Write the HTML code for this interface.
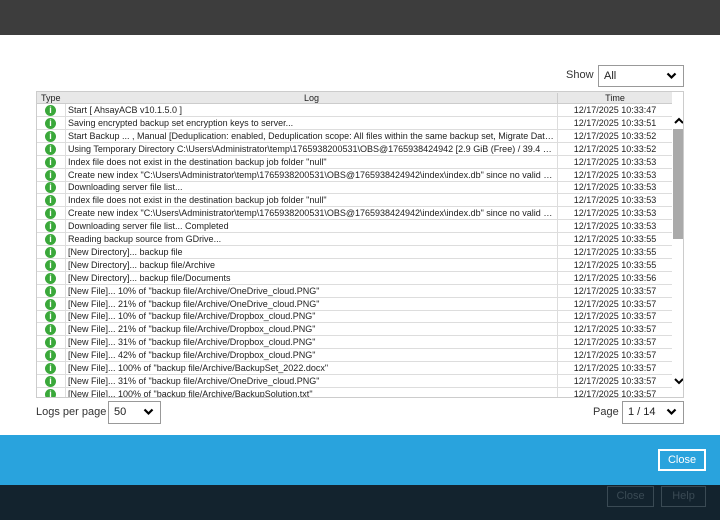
<!DOCTYPE html>
<html><head><style>
*{margin:0;padding:0;box-sizing:border-box}
body{width:720px;height:520px;position:relative;overflow:hidden;background:#fff;font-family:"Liberation Sans",sans-serif;font-size:9px;color:#222}
.top{position:absolute;left:0;top:0;width:720px;height:35px;background:#3d3d3d}
.blue{position:absolute;left:0;top:435px;width:720px;height:50px;background:#29a3dd}
.dark{position:absolute;left:0;top:485px;width:720px;height:35px;background:#13232e}
.sel{position:absolute;border:1px solid #999;background:#fff;font-size:11px;padding:4px 0 0 5px}
.chev{position:absolute;right:6px;top:5px}
.lbl{position:absolute;font-size:11px;color:#333}
.tbl{position:absolute;left:36px;top:91px;width:648px;height:307px;border:1px solid #ccc;overflow:hidden}
.hdr{position:absolute;left:0;top:0;height:12px;width:635px;background:#e8e8e8;border-bottom:1px solid #ccc;font-size:9px}
.row{position:absolute;left:0;width:635px;height:13px;border-bottom:1px solid #ddd;white-space:nowrap}
.c1{position:absolute;left:0;width:29px;height:100%;border-right:1px solid #ddd}
.c2{position:absolute;left:29px;width:492px;height:100%;border-right:1px solid #ddd;padding-left:2px;padding-right:3px;overflow:hidden;text-overflow:ellipsis;line-height:12px}
.c3{position:absolute;left:521px;width:114px;text-align:center;line-height:12px}
.ic{position:absolute;left:8px;top:1px;width:11px;height:11px;border-radius:50%;background:#3aa83a;color:#fff;font-weight:bold;font-size:9px;line-height:11px;text-align:center}
.sb{position:absolute;left:635px;top:0;width:13px;height:307px;background:#fff}
.thumb{position:absolute;left:1px;top:37px;width:11px;height:110px;background:#aaa}
.btn{position:absolute;font-size:11px;text-align:center}
</style></head><body>
<div class="top"></div>
<div class="lbl" style="left:566px;top:69px">Show</div>
<div class="sel" style="left:598px;top:65px;width:86px;height:22px">All<svg class="chev" width="11" height="9" viewBox="0 0 11 9"><path d="M1.5 2.5 L5.5 6.5 L9.5 2.5" stroke="#000" stroke-width="2.2" fill="none"/></svg></div>
<div class="tbl">
<div class="hdr"><span style="position:absolute;left:4px;top:1px">Type</span><span style="position:absolute;left:29px;width:492px;text-align:center;top:1px;border-right:1px solid #ccc;height:12px">Log</span><span style="position:absolute;left:521px;width:114px;text-align:center;top:1px">Time</span></div>
<div id="rows"></div>
<div class="sb"><svg style="position:absolute;left:2px;top:25px" width="10" height="8"><path d="M1 6 L5 2 L9 6" stroke="#000" stroke-width="2" fill="none"/></svg><div class="thumb"></div><svg style="position:absolute;left:2px;top:285px" width="10" height="8"><path d="M1 2 L5 6 L9 2" stroke="#000" stroke-width="2" fill="none"/></svg></div>
</div>
<div class="lbl" style="left:36px;top:406px">Logs per page</div>
<div class="sel" style="left:108px;top:401px;width:53px;height:23px">50<svg class="chev" width="11" height="9" viewBox="0 0 11 9"><path d="M1.5 2.5 L5.5 6.5 L9.5 2.5" stroke="#000" stroke-width="2.2" fill="none"/></svg></div>
<div class="lbl" style="left:593px;top:406px">Page</div>
<div class="sel" style="left:622px;top:401px;width:62px;height:23px">1 / 14<svg class="chev" width="11" height="9" viewBox="0 0 11 9"><path d="M1.5 2.5 L5.5 6.5 L9.5 2.5" stroke="#000" stroke-width="2.2" fill="none"/></svg></div>
<div class="blue"></div>
<div class="btn" style="left:658px;top:449px;width:48px;height:22px;border:2px solid #fff;color:#fff;line-height:18px;background:#29a3dd">Close</div>
<div class="dark"></div>
<div class="btn" style="left:607px;top:486px;width:47px;height:21px;border:1px solid #3a4a54;color:#3a4a54;line-height:19px">Close</div>
<div class="btn" style="left:661px;top:486px;width:45px;height:21px;border:1px solid #3a4a54;color:#3a4a54;line-height:19px">Help</div>
<script>
var d=[
["Start [ AhsayACB v10.1.5.0 ]","47"],
["Saving encrypted backup set encryption keys to server...","51"],
["Start Backup ... , Manual [Deduplication: enabled, Deduplication scope: All files within the same backup set, Migrate Data: ...","52"],
["Using Temporary Directory C:\\Users\\Administrator\\temp\\1765938200531\\OBS@1765938424942 [2.9 GiB (Free) / 39.4 Gi...","52"],
["Index file does not exist in the destination backup job folder \"null\"","53"],
["Create new index \"C:\\Users\\Administrator\\temp\\1765938200531\\OBS@1765938424942\\index\\index.db\" since no valid in...","53"],
["Downloading server file list...","53"],
["Index file does not exist in the destination backup job folder \"null\"","53"],
["Create new index \"C:\\Users\\Administrator\\temp\\1765938200531\\OBS@1765938424942\\index\\index.db\" since no valid in...","53"],
["Downloading server file list... Completed","53"],
["Reading backup source from GDrive...","55"],
["[New Directory]... backup file","55"],
["[New Directory]... backup file/Archive","55"],
["[New Directory]... backup file/Documents","56"],
["[New File]... 10% of \"backup file/Archive/OneDrive_cloud.PNG\"","57"],
["[New File]... 21% of \"backup file/Archive/OneDrive_cloud.PNG\"","57"],
["[New File]... 10% of \"backup file/Archive/Dropbox_cloud.PNG\"","57"],
["[New File]... 21% of \"backup file/Archive/Dropbox_cloud.PNG\"","57"],
["[New File]... 31% of \"backup file/Archive/Dropbox_cloud.PNG\"","57"],
["[New File]... 42% of \"backup file/Archive/Dropbox_cloud.PNG\"","57"],
["[New File]... 100% of \"backup file/Archive/BackupSet_2022.docx\"","57"],
["[New File]... 31% of \"backup file/Archive/OneDrive_cloud.PNG\"","57"],
["[New File]... 100% of \"backup file/Archive/BackupSolution.txt\"","57"]];
var h="";
d.forEach(function(r,i){var t=12+i*12.9;
h+='<div class="row" style="top:'+t+'px"><div class="c1"><div class="ic">i</div></div><div class="c2">'+r[0].replace(/&/g,"&amp;").replace(/</g,"&lt;")+'</div><div class="c3">12/17/2025 10:33:'+r[1]+'</div></div>';});
document.getElementById("rows").innerHTML=h;
</script>
</body></html>
